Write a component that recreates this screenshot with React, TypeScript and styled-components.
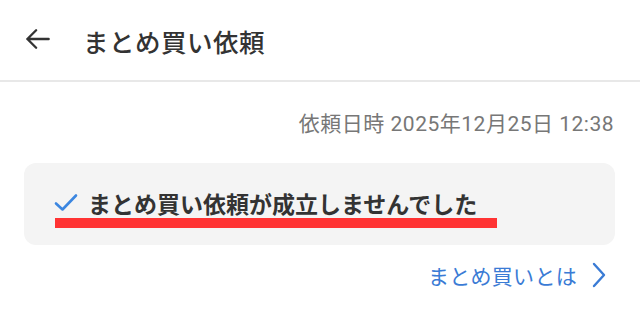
import styled, { createGlobalStyle } from 'styled-components';

const GlobalStyle = createGlobalStyle`
  body {
    margin: 0;
    background: #ffffff;
    font-family: Roboto, "Noto Sans CJK JP", sans-serif;
  }
`;

const App = () => {
  return (
    <Page>
      <GlobalStyle />
      <Header>
        <BackButton aria-label="back">
          <svg width="30" height="30" viewBox="0 0 24 24" fill="none">
            <path
              d="M20.5 12H3.5M10.5 5l-7 7 7 7"
              stroke="#333"
              strokeWidth="1.9"
              strokeLinecap="round"
              strokeLinejoin="round"
            />
          </svg>
        </BackButton>
        <Title>まとめ買い依頼</Title>
      </Header>
      <DateRow>依頼日時 2025年12月25日 12:38</DateRow>
      <Card>
        <StatusRow>
          <svg width="24" height="20" viewBox="0 0 24 20" fill="none">
            <path
              d="M2 10.5l6.5 6L22 2.5"
              stroke="#3b86e0"
              strokeWidth="2.6"
              strokeLinecap="round"
              strokeLinejoin="round"
            />
          </svg>
          <StatusText>まとめ買い依頼が成立しませんでした</StatusText>
        </StatusRow>
        <Marker />
      </Card>
      <LinkRow>
        <HelpLink>まとめ買いとは</HelpLink>
        <svg width="16" height="26" viewBox="0 0 16 26" fill="none">
          <path
            d="M3 2l10 11L3 24"
            stroke="#3a7bd5"
            strokeWidth="2.4"
            strokeLinecap="round"
            strokeLinejoin="round"
          />
        </svg>
      </LinkRow>
    </Page>
  );
};

export default App;

const Page = styled.div`
  width: 640px;
  height: 331px;
  overflow: hidden;
`;

const Header = styled.div`
  height: 80px;
  display: flex;
  align-items: center;
  padding-left: 23px;
  border-bottom: 2px solid #e8e8e8;
`;

const BackButton = styled.div`
  width: 30px;
  height: 30px;
  display: flex;
  align-items: center;
  justify-content: center;
  margin-right: 30px;
  margin-top: -2px;
`;

const Title = styled.div`
  font-size: 25.5px;
  font-weight: 500;
  color: #333;
  letter-spacing: 0.5px;
`;

const DateRow = styled.div`
  margin-top: 27px;
  padding-right: 26px;
  text-align: right;
  font-size: 21px;
  line-height: 30px;
  letter-spacing: 0.5px;
  color: #777;
`;

const Card = styled.div`
  margin: 24px 25px 0 24px;
  height: 82px;
  box-sizing: border-box;
  padding: 25px 0 0 30px;
  background: #f4f4f4;
  border-radius: 12px;
`;

const StatusRow = styled.div`
  display: flex;
  align-items: center;
  gap: 10px;
  height: 30px;
`;

const StatusText = styled.div`
  font-size: 23px;
  font-weight: 600;
  color: #333;
`;

const Marker = styled.div`
  width: 442px;
  height: 10px;
  margin-left: 1px;
  background: #ff3333;
`;

const LinkRow = styled.div`
  margin-top: 15px;
  padding-right: 33px;
  display: flex;
  justify-content: flex-end;
  align-items: center;
  gap: 14px;
`;

const HelpLink = styled.a`
  font-size: 21px;
  color: #3a7bd5;
  text-decoration: none;
  letter-spacing: 0.3px;
`;
